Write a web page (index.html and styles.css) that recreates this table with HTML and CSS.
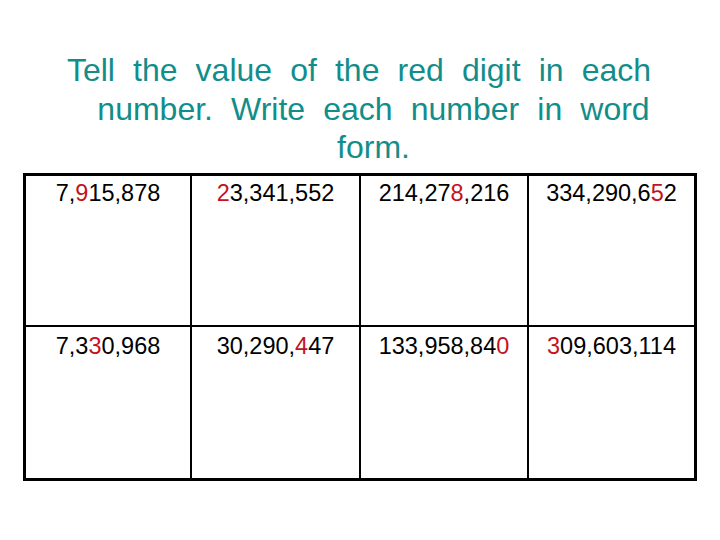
FILE: index.html
```html
<!DOCTYPE html>
<html>
<head>
<meta charset="utf-8">
<link rel="stylesheet" href="styles.css">
</head>
<body>
<div class="slide">
  <h1 class="title">
    <span class="line line-first">Tell the value of the red digit in each</span>
    <span class="line">number. Write each number in word</span>
    <span class="line">form.</span>
  </h1>
  <div class="grid">
    <div class="cell">7,<span class="red">9</span>15,878</div>
    <div class="cell"><span class="red">2</span>3,341,552</div>
    <div class="cell">214,27<span class="red">8</span>,216</div>
    <div class="cell last">334,290,6<span class="red">5</span>2</div>
    <div class="cell bottom">7,3<span class="red">3</span>0,968</div>
    <div class="cell bottom">30,290,<span class="red">4</span>47</div>
    <div class="cell bottom">133,958,84<span class="red">0</span></div>
    <div class="cell bottom last"><span class="red">3</span>09,603,114</div>
  </div>
</div>
</body>
</html>
```

FILE: styles.css
```css
html, body {
  margin: 0;
  padding: 0;
  background: #ffffff;
}

.slide {
  width: 720px;
  height: 540px;
  font-family: "Liberation Sans", Arial, sans-serif;
  padding-top: 51px;
  box-sizing: border-box;
}

.title {
  margin: 0;
  padding-left: 27px;
  font-weight: normal;
  font-size: 32px;
  line-height: 38.5px;
  word-spacing: 9.2px;
  color: #138d8a;
  text-align: center;
}

.line {
  display: block;
  white-space: nowrap;
}

.line-first {
  padding-right: 29px;
}

.grid {
  margin-top: 6px;
  margin-left: 23px;
  width: 674px;
  border: 3px solid #000;
  box-sizing: border-box;
  display: grid;
  grid-template-columns: 166px 169px 168px 165px;
  grid-template-rows: 151px 151px;
}

.cell {
  border-right: 2px solid #000;
  border-bottom: 2px solid #000;
  box-sizing: border-box;
  text-align: center;
  font-size: 23.5px;
  padding-top: 4px;
  color: #000;
}

.cell.last {
  border-right: none;
}

.cell.bottom {
  border-bottom: none;
  padding-top: 6px;
}

.red {
  color: #c41220;
}
```
